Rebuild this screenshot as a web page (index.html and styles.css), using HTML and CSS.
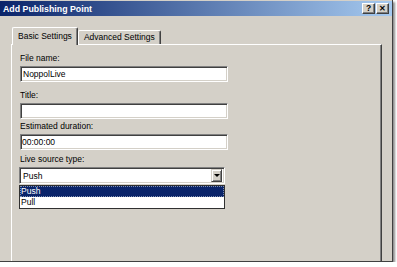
FILE: index.html
```html
<!DOCTYPE html>
<html lang="en">
<head>
    <meta charset="UTF-8">
    <meta name="viewport" content="width=device-width, initial-scale=1.0">
    <title>Add Publishing Point</title>
    <link rel="stylesheet" href="styles.css">
</head>
<body>
    <div class="window">
        <div class="titlebar">
            <span class="title">Add Publishing Point</span>
            <span class="cap-btn">?</span>
            <span class="cap-btn close">&#x2715;</span>
        </div>
        <div class="dialog-body">
            <div class="tabs">
                <div class="tab active">Basic Settings</div>
                <div class="tab">Advanced Settings</div>
            </div>
            <div class="panel">
                <div class="field">
                    <label for="file-name">File name:</label>
                    <input type="text" id="file-name" class="textbox" value="NoppolLive">
                </div>
                <div class="field field-title">
                    <label for="title">Title:</label>
                    <input type="text" id="title" class="textbox" value="">
                </div>
                <div class="field field-duration">
                    <label for="duration">Estimated duration:</label>
                    <input type="text" id="duration" class="textbox" value="00:00:00">
                </div>
                <div class="field field-source">
                    <label>Live source type:</label>
                    <div class="combo">
                        <span class="combo-value">Push</span>
                        <span class="combo-btn"><span class="arrow"></span></span>
                    </div>
                    <ul class="combo-list">
                        <li class="selected">Push</li>
                        <li>Pull</li>
                    </ul>
                </div>
            </div>
        </div>
    </div>
</body>
</html>
```

FILE: styles.css
```css
body {
  margin: 0;
  background: #ffffff;
  font-family: "Liberation Sans", Arial, sans-serif;
  font-size: 8.5px;
  color: #000;
}
.window {
  width: 393px;
  height: 262px;
  padding-top: 1px;
  box-sizing: border-box;
  background: #d4d0c8;
  border-right: 1px solid #404040;
  border-bottom: 1px solid #404040;
  box-shadow: 2px 2px 2px rgba(0, 0, 0, 0.45);
  overflow: hidden;
}
.titlebar {
  height: 15px;
  display: flex;
  align-items: center;
  gap: 1px;
  padding: 0 3px 0 3px;
  background: linear-gradient(to right, #0a246a, #a6caf0);
}
.title {
  flex: 1;
  color: #fff;
  font-weight: bold;
  font-size: 8.8px;
}
.cap-btn {
  width: 13px;
  height: 11px;
  box-sizing: border-box;
  background: #d4d0c8;
  border-top: 1px solid #fff;
  border-left: 1px solid #fff;
  border-right: 1px solid #404040;
  border-bottom: 1px solid #404040;
  box-shadow: inset -1px -1px #808080;
  display: flex;
  align-items: center;
  justify-content: center;
  font-weight: bold;
  font-size: 8.5px;
  line-height: 1;
}
.cap-btn.close {
  font-size: 7.5px;
}
.dialog-body {
  padding: 11px 10px 0 11px;
}
.tabs {
  display: flex;
  align-items: flex-end;
  height: 17px;
  padding-left: 1px;
}
.tab {
  height: 14px;
  box-sizing: border-box;
  padding: 0 5px;
  line-height: 13px;
  border-top: 1px solid #fff;
  border-left: 1px solid #fff;
  border-right: 1px solid #404040;
  box-shadow: inset -1px 0 #808080;
  border-radius: 2px 2px 0 0;
}
.tab.active {
  height: 18px;
  margin-bottom: -1px;
  padding-top: 1px;
  line-height: 14px;
  background: #d4d0c8;
  position: relative;
  z-index: 1;
}
.panel {
  height: 240px;
  padding: 7px 8px 0 8px;
  border-top: 1px solid #fff;
  border-left: 1px solid #fff;
  border-right: 1px solid #404040;
  box-shadow: inset -1px 0 #808080;
}
.field label {
  display: block;
  line-height: 13px;
  margin-bottom: 1px;
}
.field-title {
  margin-top: 7px;
}
.field-duration {
  margin-top: 1px;
}
.field-source {
  margin-top: 3px;
}
.textbox {
  display: block;
  width: 208px;
  height: 16px;
  box-sizing: border-box;
  margin: 0;
  padding: 0 2px;
  font: inherit;
  color: #000;
  background: #fff;
  border-top: 1px solid #808080;
  border-left: 1px solid #808080;
  border-right: 1px solid #fff;
  border-bottom: 1px solid #fff;
  box-shadow: inset 1px 1px #404040, inset -1px -1px #d4d0c8;
  outline: none;
}
#duration {
  padding-left: 1px;
}
.combo {
  width: 206px;
  height: 17px;
  margin-left: -1px;
  box-sizing: border-box;
  display: flex;
  align-items: center;
  padding: 2px;
  background: #fff;
  border-top: 1px solid #808080;
  border-left: 1px solid #808080;
  border-right: 1px solid #fff;
  border-bottom: 1px solid #fff;
  box-shadow: inset 1px 1px #404040, inset -1px -1px #d4d0c8;
}
.combo-value {
  flex: 1;
  padding-left: 1px;
}
.combo-btn {
  width: 11px;
  height: 13px;
  box-sizing: border-box;
  background: #d4d0c8;
  border-top: 1px solid #d4d0c8;
  border-left: 1px solid #d4d0c8;
  border-right: 1px solid #404040;
  border-bottom: 1px solid #404040;
  box-shadow: inset 1px 1px #fff, inset -1px -1px #808080;
  display: flex;
  align-items: center;
  justify-content: center;
}
.arrow {
  width: 0;
  height: 0;
  border-left: 3px solid transparent;
  border-right: 3px solid transparent;
  border-top: 3px solid #000;
}
.combo-list {
  list-style: none;
  margin: 1px 0 0 -1px;
  padding: 0;
  width: 206px;
  box-sizing: border-box;
  border: 1px solid #303030;
  background: #fff;
}
.combo-list li {
  height: 11px;
  line-height: 11px;
  padding-left: 1px;
}
.combo-list li.selected {
  background: #0a246a;
  color: #fff;
  outline: 1px dotted #8090b0;
  outline-offset: -1px;
}
```
